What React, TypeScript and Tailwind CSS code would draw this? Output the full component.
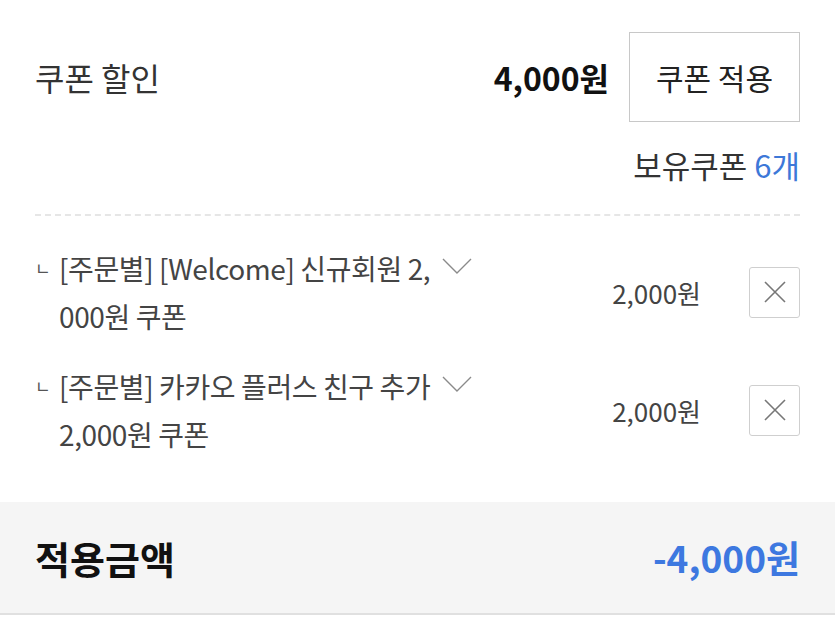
const coupons = [
    { name: "[주문별] [Welcome] 신규회원 2,\u200B000원 쿠폰", price: "2,000원" },
    { name: "[주문별] 카카오 플러스 친구 추가 2,000원 쿠폰", price: "2,000원" },
];

function Chevron() {
    return (
        <svg width="30" height="17" viewBox="0 0 30 17" fill="none" className="mt-[14px] ml-[1px] shrink-0">
            <polyline points="1,1 15,15 29,1" stroke="#8a8a8a" strokeWidth="1.4" />
        </svg>
    );
}

function CouponRow({ name, price }: { name: string; price: string }) {
    return (
        <div className="flex items-center">
            <div className="flex flex-1 items-start">
                <span className="w-[24px] text-[17px] leading-[48px] text-[#555]">ㄴ</span>
                <div className="w-[382px] text-[28px] leading-[48px] tracking-[-0.4px] text-[#444]">{name}</div>
                <Chevron />
            </div>
            <div className="mr-[48px] text-[26px] text-[#444]">{price}</div>
            <button className="flex h-[51px] w-[51px] items-center justify-center rounded-[3px] border border-[#cfcfcf] bg-white">
                <svg width="22" height="22" viewBox="0 0 22 22" fill="none">
                    <path d="M1 1L21 21M21 1L1 21" stroke="#777" strokeWidth="1.6" />
                </svg>
            </button>
        </div>
    );
}

export default function App() {
    return (
        <div className="h-[618px] w-[835px] bg-white font-['Noto_Sans_CJK_KR',sans-serif]">
            <div className="px-[35px] pt-[32px]">
                <div className="flex items-center">
                    <div className="flex-1 text-[32px] text-[#333]">쿠폰 할인</div>
                    <div className="mr-[20px] text-[32px] font-bold text-[#111]">4,000원</div>
                    <button className="h-[90px] w-[171px] border border-[#c8c8c8] bg-white text-[30px] text-[#222]">쿠폰 적용</button>
                </div>
                <div className="mt-[20px] text-right text-[31px] leading-[46px] text-[#333]">
                    보유쿠폰 <span className="text-[#3d78d8]">6개</span>
                </div>
                <div className="mt-[26px] border-t-2 border-dashed border-[#e6e6e6]" />
                <div className="flex flex-col gap-[22px] pt-[28px] pb-[44px]">
                    {coupons.map((c) => (
                        <CouponRow key={c.name} name={c.name} price={c.price} />
                    ))}
                </div>
            </div>
            <div className="flex h-[113px] items-center justify-between border-b-2 border-[#e0e0e0] bg-[#f5f5f5] px-[35px]">
                <span className="text-[38px] font-bold text-[#111]">적용금액</span>
                <span className="text-[37px] font-bold text-[#3d78e0]">-4,000원</span>
            </div>
        </div>
    );
}
